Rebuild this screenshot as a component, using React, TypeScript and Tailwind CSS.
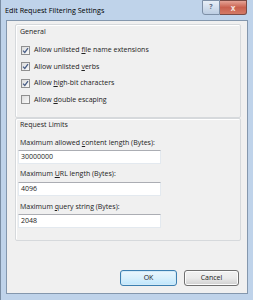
import React from "react";

const font = { fontFamily: '"Open Sans", "Noto Sans", "Liberation Sans", sans-serif' };

function Check({ checked }: { checked: boolean }) {
  return (
    <div className="w-[9px] h-[9px] border border-[#8f8f8f] bg-gradient-to-br from-[#dcdcdc] to-[#fbfbfb] flex items-center justify-center shrink-0">
      {checked && (
        <svg width="7" height="7" viewBox="0 0 7 7">
          <path d="M1 3.6 L2.8 5.4 L6 1.2" stroke="#4a5f87" strokeWidth="1.3" fill="none" />
        </svg>
      )}
    </div>
  );
}

function Row({ checked, children }: { checked: boolean; children: React.ReactNode }) {
  return (
    <div className="h-[16.5px] flex items-center gap-[4px] pl-[5px]">
      <Check checked={checked} />
      <span className="leading-[12px]">{children}</span>
    </div>
  );
}

export default function App() {
  return (
    <div
      className="w-[253px] h-[300px] bg-[#bfd3ea] flex flex-col overflow-hidden text-[7px] text-[#222222] border-l border-[#7a8da3]"
      style={font}
    >
      <div className="h-[20px] shrink-0 flex items-start relative">
        <span className="pl-[4px] pt-[4px] leading-[12px] text-[7.2px] text-black">Edit Request Filtering Settings</span>
        <div className="absolute top-0 left-[201px] flex">
          <div className="w-[18px] h-[15px] rounded-bl-[3px] border border-[#7d8fa6] bg-gradient-to-b from-[#e8eff7] to-[#bccde2] flex items-center justify-center text-[7px] font-bold text-[#5a6a80]">
            ?
          </div>
          <div className="w-[27px] h-[15px] rounded-br-[3px] border border-l-0 border-[#7a4a44] bg-gradient-to-b from-[#e5a396] via-[#c9604e] to-[#d47a66] flex items-center justify-center text-[8px] font-bold text-[#f4e0dc]">
            x
          </div>
        </div>
      </div>
      <div className="flex-1 mx-[5px] mb-[6px] border border-[#8497ad] bg-[#f0f0f0] flex flex-col">
        <div className="mt-[3px] ml-[8px] mr-[6px] h-[94px] border border-[#d6d9dc] rounded-[2px] shadow-[inset_1px_1px_0_#ffffff] flex flex-col">
          <div className="leading-[12px] pl-[4px] pt-[1px]">General</div>
          <div className="mt-[4px]">
            <Row checked>
              Allow unlisted <u>f</u>ile name extensions
            </Row>
            <Row checked>
              Allow unlisted <u>v</u>erbs
            </Row>
            <Row checked>
              Allow <u>h</u>igh-bit characters
            </Row>
            <Row checked={false}>
              Allow <u>d</u>ouble escaping
            </Row>
          </div>
        </div>
        <div className="ml-[8px] mr-[6px] h-[123px] border border-[#d6d9dc] rounded-[2px] shadow-[inset_1px_1px_0_#ffffff] flex flex-col">
          <div className="leading-[12px] pl-[4px]">Request Limits</div>
          <div className="leading-[12px] pl-[4px] mt-[6px]">
            Maximum allowed <u>c</u>ontent length (Bytes):
          </div>
          <div className="mt-[1px] ml-[2px] w-[143px] h-[14px] bg-white border border-[#e3e9ef] border-t-[#abadb3] flex items-center pl-[2px] leading-[12px]">
            30000000
          </div>
          <div className="leading-[12px] pl-[4px] mt-[4px]">
            Maximum <u>U</u>RL length (Bytes):
          </div>
          <div className="mt-[2px] ml-[2px] w-[143px] h-[14px] bg-white border border-[#e3e9ef] border-t-[#abadb3] flex items-center pl-[2px] leading-[12px]">
            4096
          </div>
          <div className="leading-[12px] pl-[4px] mt-[5px]">
            Maximum <u>q</u>uery string (Bytes):
          </div>
          <div className="mt-[1px] ml-[2px] w-[143px] h-[14px] bg-white border border-[#e3e9ef] border-t-[#abadb3] flex items-center pl-[2px] leading-[12px]">
            2048
          </div>
        </div>
        <div className="mt-[29px] flex justify-end gap-[7px] mr-[8px]">
          <div className="w-[57px] h-[16px] rounded-[3px] border border-[#3c7fb1] bg-gradient-to-b from-[#eaf6fd] via-[#d9f0fc] to-[#bee6fd] shadow-[inset_0_0_0_1px_#d2eaf7] flex items-center justify-center">
            OK
          </div>
          <div className="w-[55px] h-[16px] rounded-[3px] border border-[#707070] bg-gradient-to-b from-[#f2f2f2] via-[#ebebeb] to-[#cfcfcf] shadow-[inset_0_0_0_1px_#fcfcfc] flex items-center justify-center">
            Cancel
          </div>
        </div>
      </div>
    </div>
  );
}
